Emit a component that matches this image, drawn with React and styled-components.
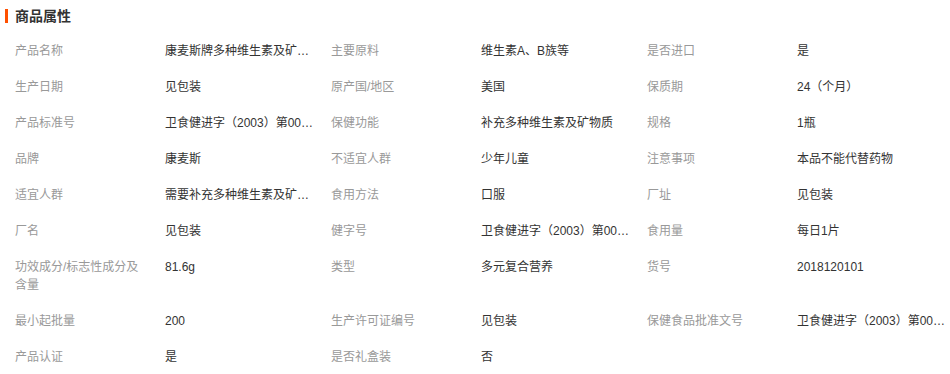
import styled, { createGlobalStyle } from "styled-components";

const GlobalStyle = createGlobalStyle`
  html, body {
    margin: 0;
    padding: 0;
    background: #fff;
  }
  body {
    font-family: "Liberation Sans", "Noto Sans CJK SC", sans-serif;
  }
`;

const Panel = styled.section`
  width: 948px;
`;

const Title = styled.h3`
  margin: 0 0 2px;
  height: 31px;
  display: flex;
  align-items: center;
  padding-left: 5px;
  font-size: 14px;
  font-weight: bold;
  color: #333;
  span {
    display: inline-block;
    line-height: 14px;
    border-left: 3px solid #ff5000;
    padding-left: 7px;
  }
`;

const Grid = styled.div`
  display: grid;
  grid-template-columns: repeat(3, 150px 166px);
`;

const Cell = styled.div`
  padding: 9px ${({ $label }) => ($label ? "8px" : "2px")} 9px 15px;
  font-size: 12px;
  line-height: 18px;
  color: ${({ $label }) => ($label ? "#999" : "#333")};
  ${({ $label }) =>
    !$label &&
    `
    white-space: nowrap;
    overflow: hidden;
    text-overflow: ellipsis;
  `}
`;

const attrs = [
  ["产品名称", "康麦斯牌多种维生素及矿物质片"],
  ["主要原料", "维生素A、B族等"],
  ["是否进口", "是"],
  ["生产日期", "见包装"],
  ["原产国/地区", "美国"],
  ["保质期", "24（个月）"],
  ["产品标准号", "卫食健进字（2003）第0076号"],
  ["保健功能", "补充多种维生素及矿物质"],
  ["规格", "1瓶"],
  ["品牌", "康麦斯"],
  ["不适宜人群", "少年儿童"],
  ["注意事项", "本品不能代替药物"],
  ["适宜人群", "需要补充多种维生素及矿物质的成人"],
  ["食用方法", "口服"],
  ["厂址", "见包装"],
  ["厂名", "见包装"],
  ["健字号", "卫食健进字（2003）第0076号"],
  ["食用量", "每日1片"],
  ["功效成分/标志性成分及含量", "81.6g"],
  ["类型", "多元复合营养"],
  ["货号", "2018120101"],
  ["最小起批量", "200"],
  ["生产许可证编号", "见包装"],
  ["保健食品批准文号", "卫食健进字（2003）第0076号"],
  ["产品认证", "是"],
  ["是否礼盒装", "否"],
];

export default function App() {
  return (
    <>
      <GlobalStyle />
      <Panel>
        <Title>
          <span>商品属性</span>
        </Title>
        <Grid>
          {attrs.map(([k, v]) => [
            <Cell $label key={k + "-k"}>{k}</Cell>,
            <Cell key={k + "-v"}>{v}</Cell>,
          ])}
        </Grid>
      </Panel>
    </>
  );
}
